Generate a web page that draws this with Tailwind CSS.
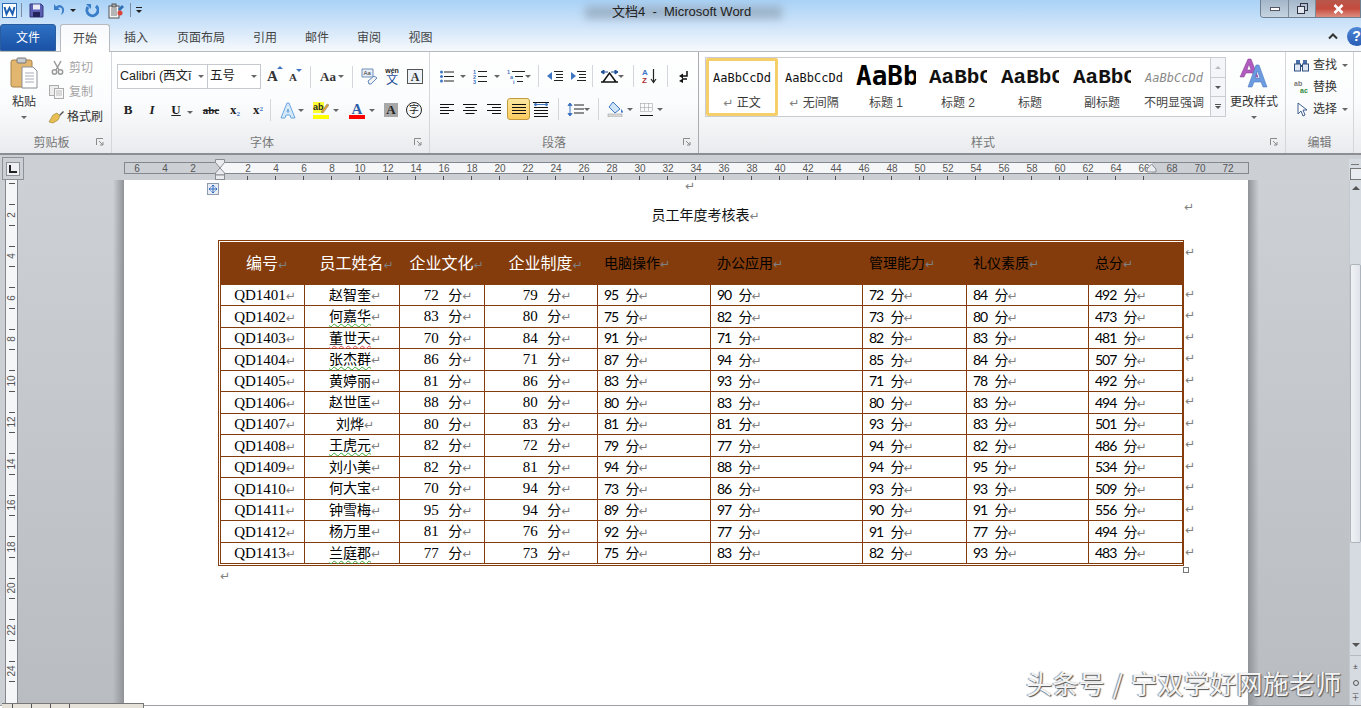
<!DOCTYPE html>
<html lang="zh">
<head>
<meta charset="utf-8">
<script src="https://cdn.jsdelivr.net/npm/@tailwindcss/browser@4"></script>
<title>文档4 - Microsoft Word</title>
</head>
<body class="relative w-[1361px] h-[708px] overflow-hidden bg-[#ccd0d5] font-['Liberation_Sans','Noto_Sans_CJK_SC',sans-serif] text-[12px] text-[#444] [&_i]:not-italic [&_i]:text-[#808080] [&_i]:text-[12px] [&_i]:leading-none [&_i]:tracking-normal [&_i]:font-['DejaVu_Sans'] [&_b.c]:inline-block [&_b.c]:w-0 [&_b.c]:h-0 [&_b.c]:border-x-[3px] [&_b.c]:border-x-transparent [&_b.c]:border-t-[3px] [&_b.c]:border-t-[#666] [&_b.s]:block [&_b.s]:w-px [&_b.s]:h-[22px] [&_b.s]:bg-[#d3d6da]">

<div class="flex flex-col h-[708px]">
  <!-- header: title + tabs -->
  <div class="h-[52px] shrink-0 bg-gradient-to-b from-[#a9d2f6] via-[#cfe4f9] to-[#f6f9fc] border-b border-[#b6b9bd]">
    <div class="relative h-[24px] flex items-start pt-[3px] pl-[2px] gap-0">
      <svg class="w-[15px] h-[15px]" viewBox="0 0 15 15"><rect x=".5" y=".5" width="14" height="14" fill="#fff" stroke="#2b6cb5"/><path d="M2.500 4l2 7 3-6 3 6 2-7" fill="none" stroke="#1d5fb0" stroke-width="2"/></svg>
      <span class="ml-[4px] w-px h-[14px] bg-[#7c8ea3]"></span>
      <svg class="ml-[7px] w-[15px] h-[15px]" viewBox="0 0 15 15"><path d="M1 1h11l2 2v11H1z" fill="#5b5fb3" stroke="#34367a"/><rect x="4" y="1.500" width="7" height="5" fill="#e9ecf6"/><rect x="4" y="9" width="7" height="5" fill="#23245c"/></svg>
      <svg class="ml-[7px] w-[15px] h-[14px]" viewBox="0 0 15 14"><path d="M3 1v6h6L7 5c3-1.500 5 1 4 4l-1 3c4-2 4-7 1-9-2-1.500-4-1-6 .5z" fill="#3a7dc9"/></svg>
      <b class="c ml-[4px] mt-[6px] !border-t-[#222]"></b>
      <svg class="ml-[9px] w-[14px] h-[15px]" viewBox="0 0 14 15"><path d="M11 3A5.500 5.500 0 1 1 3 4" fill="none" stroke="#3a7dc9" stroke-width="3"/><path d="M1 1h5v5z" fill="#3a7dc9"/></svg>
      <svg class="ml-[9px] w-[16px] h-[16px]" viewBox="0 0 16 16"><rect x="1" y="3" width="10" height="12" fill="#f4f4f4" stroke="#555"/><path d="M3 6h6M3 8h6M3 10h6M3 12h6" stroke="#777"/><rect x="4" y="1" width="4" height="3" fill="#aaa" stroke="#555"/><path d="M10 6l4-4 2 2-4 4z" fill="#2f6fb5"/><circle cx="12" cy="10" r="2.500" fill="#d9433a"/></svg>
      <span class="ml-[6px] w-px h-[14px] bg-[#7c8ea3]"></span>
      <span class="ml-[5px] mt-[4px] flex flex-col items-center gap-[2px]"><span class="block w-[6px] h-px bg-[#222]"></span><b class="c !border-t-[#222]"></b></span>
      <div class="absolute left-[585px] top-[6px] w-[197px] h-[13px] bg-[#7f8d9c] opacity-50 blur-[4px]"></div>
      <div class="absolute left-[612px] top-[3px] text-[13px] leading-[18px] text-[#222] whitespace-pre">文档4  -  Microsoft Word</div>
      <div class="absolute right-0 top-0 flex h-[18px] border border-t-0 border-[#6f7f90] rounded-bl-[4px] overflow-hidden w-[101px]">
        <span class="w-[28px] bg-gradient-to-b from-[#a3b6c9] to-[#c6d4e1] border-r border-[#7c8a99] flex items-center justify-center"><span class="block w-[10px] h-[4px] bg-white border border-[#556]"></span></span>
        <span class="w-[27px] bg-gradient-to-b from-[#a3b6c9] to-[#c6d4e1] border-r border-[#7c8a99] flex items-center justify-center"><svg class="w-[11px] h-[11px]" viewBox="0 0 11 11"><rect x="3.500" y=".5" width="7" height="7" fill="none" stroke="#334"/><rect x=".5" y="3.500" width="7" height="7" fill="#dfe6ee" stroke="#334"/></svg></span>
        <span class="flex-1 bg-gradient-to-b from-[#b8574c] via-[#c44a3d] to-[#dc8d80] flex items-center justify-center"><svg class="w-[11px] h-[10px]" viewBox="0 0 11 10"><path d="M1.500 1l8 8M9.500 1l-8 8" stroke="#fff" stroke-width="2.600"/></svg></span>
      </div>
    </div>
    <div class="relative h-[27px] flex items-end text-[#444]">
      <div class="w-[56px] h-[27px] rounded-t-[3px] bg-gradient-to-b from-[#2e70c3] to-[#1a52a6] border border-[#2a5d9e] text-white flex items-center justify-center text-[12px]">文件</div>
      <div class="ml-[4px] w-[50px] h-[28px] -mb-px relative z-10 rounded-t-[3px] bg-gradient-to-b from-[#f7f9fc] to-white border border-b-0 border-[#b6b9bd] flex items-center justify-center">开始</div>
      <div class="w-[52px] h-[27px] flex items-center justify-center">插入</div>
      <div class="w-[78px] h-[27px] flex items-center justify-center">页面布局</div>
      <div class="w-[50px] h-[27px] flex items-center justify-center">引用</div>
      <div class="w-[54px] h-[27px] flex items-center justify-center">邮件</div>
      <div class="w-[50px] h-[27px] flex items-center justify-center">审阅</div>
      <div class="w-[53px] h-[27px] flex items-center justify-center">视图</div>
      <svg class="absolute left-[1328px] top-[9px] w-[10px] h-[7px]" viewBox="0 0 10 7"><path d="M1 5.500l4-4 4 4" fill="none" stroke="#333" stroke-width="2"/></svg>
      <div class="absolute left-[1347px] top-[3px] w-[19px] h-[19px] rounded-full bg-gradient-to-b from-[#4f87d6] to-[#2a5db5] text-white font-bold text-[14px] leading-[19px] text-center">?</div>
    </div>
  </div>

  <!-- ribbon -->
  <div class="h-[103px] shrink-0 flex bg-gradient-to-b from-white via-[#fbfcfd] to-[#e9ebee] border-b-2 border-[#8b8e93] text-[#444]">
    <!-- clipboard -->
    <div class="w-[112px] border-r border-[#d3d6da] flex flex-col">
      <div class="h-[81px] flex">
        <div class="w-[48px] flex flex-col items-center pt-[5px]">
          <svg class="w-[28px] h-[32px]" viewBox="0 0 28 32"><rect x="1" y="3" width="21" height="27" rx="2" fill="#e2b66e" stroke="#a5824a"/><rect x="7" y="1" width="9" height="5" rx="1" fill="#c9ccd1" stroke="#777"/><path d="M12 10h11l4 4v17H12z" fill="#fff" stroke="#8b8f96"/><path d="M15 16h9M15 19h9M15 22h9M15 25h9" stroke="#aab"/></svg>
          <span class="mt-[4px] leading-[18px] text-[#333]">粘贴</span>
          <b class="c mt-[5px]"></b>
        </div>
        <div class="flex flex-col pt-[3px] text-[#a5a5a5]">
          <div class="h-[25px] flex items-center gap-[5px] ml-[3px]"><svg class="w-[13px] h-[15px]" viewBox="0 0 13 15"><path d="M3 1l5 9M10 1L5 10" stroke="#9a9a9a" stroke-width="1.500"/><circle cx="3.500" cy="12" r="2.200" fill="none" stroke="#9a9a9a" stroke-width="1.500"/><circle cx="9.500" cy="12" r="2.200" fill="none" stroke="#9a9a9a" stroke-width="1.500"/></svg>剪切</div>
          <div class="h-[24px] flex items-center gap-[5px] ml-[1px]"><svg class="w-[15px] h-[14px]" viewBox="0 0 15 14"><rect x=".5" y=".5" width="9" height="10" fill="#eee" stroke="#aaa"/><rect x="5.500" y="3.500" width="9" height="10" fill="#f7f7f7" stroke="#aaa"/><path d="M7 6h6M7 8h6M7 10h6" stroke="#bbb"/></svg>复制</div>
          <div class="h-[25px] flex items-center gap-[2px] text-[#333]"><svg class="w-[17px] h-[14px]" viewBox="0 0 17 14"><path d="M11 5l4-4 1 1-4 4z" fill="#555"/><path d="M5 5l4-2 3 3-2 4-5 3-4-1z" fill="#e7bf53" stroke="#9a7d2c" stroke-width=".6"/></svg>格式刷</div>
        </div>
      </div>
      <div class="relative h-[18px] text-center text-[#777] leading-[20px] pr-[8px]">剪贴板<svg class="absolute right-[7px] top-[5px] w-[8px] h-[8px]" viewBox="0 0 8 8"><path d="M.5 7V.5H7M3 3l4 4M4 7h3V4" fill="none" stroke="#8a8a8a"/></svg></div>
    </div>
    <!-- font -->
    <div class="w-[318px] border-r border-[#d3d6da] flex flex-col">
      <div class="h-[81px] pl-[5px] pt-[12px] flex flex-col">
        <div class="h-[25px] flex items-center text-[#222]">
          <div class="w-[91px] h-[25px] border border-[#c6c9cd] bg-white flex items-center pl-[2px] text-[12.500px] overflow-hidden whitespace-nowrap"><span class="w-[73px] overflow-hidden">Calibri (西文ī</span><b class="c ml-[5px]"></b></div>
          <div class="w-[53px] h-[25px] border border-l-0 border-[#c6c9cd] bg-white flex items-center pl-[2px] text-[12.500px]"><span class="w-[39px]">五号</span><b class="c ml-[2px]"></b></div>
          <span class="w-[23px] flex justify-center font-['Liberation_Serif'] font-bold text-[15px] text-[#333] relative">A<b class="c absolute right-[1px] top-[1px] rotate-180 !border-t-[#3f76c4]"></b></span>
          <span class="w-[18px] flex justify-center font-['Liberation_Serif'] font-bold text-[11px] text-[#333] relative pt-[2px]">A<b class="c absolute right-0 top-[2px] !border-t-[#3f76c4]"></b></span>
          <span class="w-[17px] flex justify-center"><b class="s"></b></span>
          <span class="w-[26px] flex items-center pl-[1px] font-['Liberation_Serif'] font-bold text-[13px] text-[#333]">Aa<b class="c ml-[2px]"></b></span>
          <span class="w-[14px] flex justify-center"><b class="s"></b></span>
          <span class="w-[18px] flex justify-center"><svg class="w-[17px] h-[17px]" viewBox="0 0 17 17"><path d="M2 1h11v8H2z" fill="#e8eef7" stroke="#6f8fb8"/><text x="3.500" y="7" font-size="6" font-family="Liberation Sans" fill="#333">Aa</text><path d="M8 13l6-5 3 2-6 6H9z" fill="#f3f3f3" stroke="#5c88c2"/></svg></span>
          <span class="w-[30px] flex flex-col items-center leading-none text-[#1d4f97]"><span class="text-[7px] font-bold text-[#222] leading-[8px]">wén</span><span class="text-[12px] leading-[11px]">文</span></span>
          <span class="w-[16px] h-[15px] border border-[#555] bg-[#eef3f9] flex items-center justify-center font-['Liberation_Serif'] font-bold text-[12px] text-[#333]">A</span>
        </div>
        <div class="mt-[11px] h-[20px] flex items-center text-[#222]">
          <span class="w-[22px] text-center font-['Liberation_Serif'] font-bold text-[13px]">B</span>
          <span class="w-[26px] text-center font-['Liberation_Serif'] italic font-bold text-[13px]">I</span>
          <span class="w-[22px] text-center font-['Liberation_Serif'] font-bold text-[13px] underline">U</span>
          <span class="w-[11px]"><b class="c"></b></span>
          <span class="w-[26px] text-center font-['Liberation_Serif'] font-bold text-[11px] line-through">abc</span>
          <span class="w-[22px] text-center font-['Liberation_Serif'] font-bold text-[13px]">x<sub class="text-[7px] text-[#3f76c4]">2</sub></span>
          <span class="w-[24px] text-center font-['Liberation_Serif'] font-bold text-[13px]">x<sup class="text-[7px] text-[#3f76c4]">2</sup></span>
          <span class="w-[6px]"><b class="s"></b></span>
          <span class="w-[32px] flex items-center justify-center gap-[2px]"><svg class="w-[16px] h-[17px]" viewBox="0 0 16 17"><path d="M1 16L7 1h2l6 15h-4l-1-3H6l-1 3zM7 10h2L8 7z" fill="#d6eafb" stroke="#6aa6dd"/></svg><b class="c"></b></span>
          <span class="w-[36px] flex items-center justify-center gap-[4px]"><span class="relative w-[16px] h-[17px] block"><span class="absolute left-0 top-0 text-[9px] font-bold leading-[11px] bg-[#ffff33] text-[#222]">ab</span><svg class="absolute right-0 top-0 w-[9px] h-[12px]" viewBox="0 0 9 12"><path d="M1 10l6-8 2 1-6 8z" fill="#e4a43a" stroke="#777" stroke-width=".5"/></svg><span class="absolute left-0 right-0 bottom-0 h-[4px] bg-[#ffff00]"></span></span><b class="c"></b></span>
          <span class="w-[36px] flex items-center justify-center gap-[4px]"><span class="relative w-[16px] h-[17px] block text-center"><span class="font-['Liberation_Serif'] font-bold text-[15px] leading-[14px] block text-[#2f5fa8]">A</span><span class="absolute left-0 right-0 bottom-0 h-[4px] bg-[#f00]"></span></span><b class="c"></b></span>
          <span class="w-[22px] flex justify-center"><span class="w-[14px] h-[14px] bg-[#a8a8a8] flex items-center justify-center font-['Liberation_Serif'] font-bold text-[13px] text-[#222]">A</span></span>
          <span class="w-[24px] flex justify-center"><span class="w-[16px] h-[16px] rounded-full border border-[#222] flex items-center justify-center text-[10px] leading-none text-[#222]">字</span></span>
        </div>
      </div>
      <div class="relative h-[18px] text-center text-[#777] leading-[20px] pr-[17px]">字体<svg class="absolute right-[7px] top-[5px] w-[8px] h-[8px]" viewBox="0 0 8 8"><path d="M.5 7V.5H7M3 3l4 4M4 7h3V4" fill="none" stroke="#8a8a8a"/></svg></div>
    </div>
    <!-- paragraph -->
    <div class="w-[269px] border-r border-[#a9acb0] flex flex-col">
      <div class="h-[81px] pt-[13px] flex flex-col">
        <div class="h-[22px] flex items-center">
          <svg class="ml-[10px] w-[14px] h-[13px]" viewBox="0 0 14 13"><path d="M4 2h10M4 6.500h10M4 11h10" stroke="#222"/><circle cx="1.500" cy="2" r="1.500" fill="#3f76c4"/><circle cx="1.500" cy="6.500" r="1.500" fill="#3f76c4"/><circle cx="1.500" cy="11" r="1.500" fill="#3f76c4"/></svg>
          <b class="c ml-[6px]"></b>
          <svg class="ml-[7px] w-[14px] h-[15px]" viewBox="0 0 14 15"><path d="M5 2.500h9M5 7.500h9M5 12.500h9" stroke="#222"/><text x="0" y="5" font-size="5.500" fill="#3f76c4" font-weight="bold">1</text><text x="0" y="10" font-size="5.500" fill="#3f76c4" font-weight="bold">2</text><text x="0" y="15" font-size="5.500" fill="#3f76c4" font-weight="bold">3</text></svg>
          <b class="c ml-[7px]"></b>
          <svg class="ml-[7px] w-[18px] h-[15px]" viewBox="0 0 18 15"><path d="M5 2.500h13M8 7.500h8M10 12.500h6" stroke="#222"/><text x="0" y="5" font-size="5.500" fill="#3f76c4" font-weight="bold">1</text><text x="3" y="10" font-size="5.500" fill="#3f76c4" font-weight="bold">a</text><text x="6" y="15" font-size="5.500" fill="#3f76c4" font-weight="bold">i</text></svg>
          <b class="c"></b>
          <b class="s ml-[7px]"></b>
          <svg class="ml-[8px] w-[16px] h-[13px]" viewBox="0 0 16 13"><path d="M7 1.500h9M9 4.500h7M9 7.500h7M7 10.500h9" stroke="#222" /><path d="M0 6l5-4v8z" fill="#3f76c4"/></svg>
          <svg class="ml-[7px] w-[16px] h-[13px]" viewBox="0 0 16 13"><path d="M7 1.500h9M9 4.500h7M9 7.500h7M7 10.500h9" stroke="#222"/><path d="M6 6L1 2v8z" fill="#3f76c4"/></svg>
          <b class="s ml-[6px]"></b>
          <svg class="ml-[8px] w-[17px] h-[13px]" viewBox="0 0 17 13"><path d="M2 12L8.500 3 15 12M0 12h17" fill="none" stroke="#111" stroke-width="1.500"/><path d="M0 2l3-2v4zM17 2l-3-2v4zM3 2h4M10 2h4" fill="#1d4f97" stroke="#1d4f97"/></svg>
          <b class="c"></b>
          <b class="s ml-[9px]"></b>
          <svg class="ml-[8px] w-[15px] h-[16px]" viewBox="0 0 15 16"><text x="0" y="7" font-size="8" font-weight="bold" fill="#3f76c4">A</text><text x="0" y="15" font-size="8" font-weight="bold" fill="#a33">Z</text><path d="M11.500 1v13M9 11l2.500 3.500L14 11" fill="none" stroke="#222" stroke-width="1.200"/></svg>
          <b class="s ml-[10px]"></b>
          <svg class="ml-[10px] w-[11px] h-[13px]" viewBox="0 0 11 13"><path d="M9 1v5H4M4 9h5" fill="none" stroke="#111" stroke-width="1.500"/><path d="M5 3.500L1 6l4 2.500zM1 11l4-2.500V13z" fill="#111"/></svg>
        </div>
        <div class="mt-[11px] h-[22px] flex items-center">
          <svg class="ml-[10px] w-[14px] h-[11px]" viewBox="0 0 14 11"><path d="M0 .5h14M0 3.500h9M0 6.500h14M0 9.500h9" stroke="#111"/></svg>
          <svg class="ml-[9px] w-[14px] h-[11px]" viewBox="0 0 14 11"><path d="M0 .5h14M2.500 3.500h9M0 6.500h14M2.500 9.500h9" stroke="#111"/></svg>
          <svg class="ml-[10px] w-[14px] h-[11px]" viewBox="0 0 14 11"><path d="M0 .5h14M5 3.500h9M0 6.500h14M5 9.500h9" stroke="#111"/></svg>
          <span class="ml-[6px] w-[23px] h-[22px] rounded-[3px] border border-[#c29b3f] bg-gradient-to-b from-[#fde8a0] to-[#fbcc5c] flex items-center justify-center"><svg class="w-[14px] h-[11px]" viewBox="0 0 14 11"><path d="M0 .5h14M0 3.500h14M0 6.500h14M0 9.500h14" stroke="#111"/></svg></span>
          <svg class="ml-[3px] w-[16px] h-[16px]" viewBox="0 0 16 16"><path d="M0 1.500h16M1 6.500h14M1 9.500h14M1 12.500h14M1 15.500h14" stroke="#111"/><path d="M1 3.500h14M1 3.500l2-1.500v3zM15 3.500l-2-1.500v3z" stroke="#3f76c4" fill="#3f76c4"/></svg>
          <b class="s ml-[9px]"></b>
          <svg class="ml-[8px] w-[17px] h-[15px]" viewBox="0 0 17 15"><path d="M3 1v13M1 3.500l2-2.500 2 2.500zM1 11.500L3 14l2-2.500z" fill="#3f76c4" stroke="#3f76c4"/><path d="M7 3h10M7 7h10M7 11h10" stroke="#222"/></svg>
          <b class="c"></b>
          <b class="s ml-[8px]"></b>
          <svg class="ml-[8px] w-[17px] h-[16px]" viewBox="0 0 17 16"><path d="M6 1l7 7-5 4-6-6z" fill="#cfe4f7" stroke="#3f76c4"/><path d="M14 8s2 2 2 3-2 1-2 0z" fill="#3f76c4"/><rect x="1" y="13" width="14" height="3" fill="#d9d9d9" stroke="#999" stroke-width=".5"/></svg>
          <b class="c ml-[3px]"></b>
          <svg class="ml-[7px] w-[13px] h-[13px]" viewBox="0 0 13 13"><path d="M.5.5h12M.5 4.500h12M.5 8.500h12M.5.5v8M4.500.5v8M8.500.5v8M12.500.5v8" stroke="#999" stroke-dasharray="1 1"/><path d="M0 12.500h13" stroke="#111"/></svg>
          <b class="c ml-[4px]"></b>
        </div>
      </div>
      <div class="relative h-[18px] text-center text-[#777] leading-[20px] pr-[20px]">段落<svg class="absolute right-[7px] top-[5px] w-[8px] h-[8px]" viewBox="0 0 8 8"><path d="M.5 7V.5H7M3 3l4 4M4 7h3V4" fill="none" stroke="#8a8a8a"/></svg></div>
    </div>
    <!-- styles -->
    <div class="w-[587px] border-r border-[#d3d6da] flex flex-col">
      <div class="h-[81px] pt-[5px] pl-[6px] flex">
        <div class="w-[521px] h-[60px] border border-[#c9ccd0] bg-white flex text-[#444]">
          <div class="w-[72px] h-[58px] border-[3px] border-[#f4cf6a] rounded-[2px] flex flex-col items-center shrink-0">
            <span class="mt-[5px] h-[24px] w-[60px] overflow-hidden font-['DejaVu_Sans_Mono'] text-[12px] leading-[24px] text-[#111] whitespace-nowrap text-center">AaBbCcDd</span>
            <span class="mt-[5px] leading-[16px] text-[#333]"><i>↵</i> 正文</span>
          </div>
          <div class="w-[72px] flex flex-col items-center shrink-0">
            <span class="mt-[8px] h-[24px] w-[60px] overflow-hidden font-['DejaVu_Sans_Mono'] text-[12px] leading-[24px] text-[#111] whitespace-nowrap text-center">AaBbCcDd</span>
            <span class="mt-[5px] leading-[16px]"><i>↵</i> 无间隔</span>
          </div>
          <div class="w-[72px] flex flex-col items-center shrink-0">
            <span class="mt-[4px] h-[28px] w-[60px] overflow-hidden font-['DejaVu_Sans_Mono'] font-bold text-[26px] leading-[28px] text-black whitespace-nowrap">AaBb</span>
            <span class="mt-[5px] leading-[16px]">标题 1</span>
          </div>
          <div class="w-[72px] flex flex-col items-center shrink-0">
            <span class="mt-[8px] h-[24px] w-[58px] overflow-hidden font-['Liberation_Mono'] font-bold text-[21px] leading-[24px] text-[#111] whitespace-nowrap">AaBbC</span>
            <span class="mt-[5px] leading-[16px]">标题 2</span>
          </div>
          <div class="w-[72px] flex flex-col items-center shrink-0">
            <span class="mt-[8px] h-[24px] w-[58px] overflow-hidden font-['Liberation_Mono'] font-bold text-[21px] leading-[24px] text-[#111] whitespace-nowrap">AaBbC</span>
            <span class="mt-[5px] leading-[16px]">标题</span>
          </div>
          <div class="w-[72px] flex flex-col items-center shrink-0">
            <span class="mt-[8px] h-[24px] w-[58px] overflow-hidden font-['Liberation_Mono'] font-bold text-[21px] leading-[24px] text-[#111] whitespace-nowrap">AaBbC</span>
            <span class="mt-[5px] leading-[16px]">副标题</span>
          </div>
          <div class="w-[72px] flex flex-col items-center shrink-0">
            <span class="mt-[8px] h-[24px] w-[60px] overflow-hidden font-['DejaVu_Sans_Mono'] italic text-[12px] leading-[24px] text-[#8a8a8a] whitespace-nowrap text-center">AaBbCcDd</span>
            <span class="mt-[5px] leading-[16px]">不明显强调</span>
          </div>
          <div class="w-[15px] ml-auto flex flex-col border-l border-[#c9ccd0] bg-[#f3f5f8]">
            <span class="h-[20px] flex items-center justify-center border-b border-[#c9ccd0]"><b class="c rotate-180 !border-t-[#bbb]"></b></span>
            <span class="h-[19px] flex items-center justify-center border-b border-[#c9ccd0]"><b class="c !border-t-[#555]"></b></span>
            <span class="h-[19px] flex flex-col gap-[1px] items-center justify-center"><span class="block w-[6px] h-px bg-[#555]"></span><b class="c !border-t-[#555]"></b></span>
          </div>
        </div>
        <div class="w-[56px] flex flex-col items-center">
          <svg class="mt-[1px] w-[30px] h-[30px]" viewBox="0 0 30 30"><path d="M1 19L9 1h3l7 18h-4l-1-4H7l-2 4zM8 12h4l-2-6z" fill="#b25bbf" stroke="#7f3a8c" stroke-width=".5"/><path d="M9 29L17 7h3l8 22h-4l-2-5h-7l-2 5zM16 20h5l-2.500-7z" fill="#6d9be0" stroke="#3e6fb8" stroke-width=".5"/></svg>
          <span class="mt-[5px] leading-[18px] text-[#333] whitespace-nowrap">更改样式</span>
          <b class="c mt-[5px]"></b>
        </div>
      </div>
      <div class="relative h-[18px] text-[#777] leading-[20px] pl-[272px]">样式<svg class="absolute right-[7px] top-[5px] w-[8px] h-[8px]" viewBox="0 0 8 8"><path d="M.5 7V.5H7M3 3l4 4M4 7h3V4" fill="none" stroke="#8a8a8a"/></svg></div>
    </div>
    <!-- editing -->
    <div class="w-[68px] border-r border-[#d3d6da] flex flex-col">
      <div class="h-[81px] pt-[2px] pl-[8px] text-[#333]">
        <div class="h-[22px] flex items-center gap-[4px]"><svg class="w-[15px] h-[14px]" viewBox="0 0 15 14"><path d="M2 2h4v4H2zM9 2h4v4H9z" fill="#4a6ea8"/><rect x=".5" y="6" width="6" height="7" fill="#dfe7f3" stroke="#2f4f80"/><rect x="8.500" y="6" width="6" height="7" fill="#dfe7f3" stroke="#2f4f80"/><path d="M6 7h3v2H6z" fill="#2f4f80"/></svg>查找<b class="c ml-[1px]"></b></div>
        <div class="h-[22px] flex items-center gap-[4px]"><span class="w-[15px] text-[7px] leading-[7px] font-bold text-[#777]">ab<br><span class="text-[#2d8a3a] pl-[6px]">ac</span></span>替换</div>
        <div class="h-[22px] flex items-center gap-[4px]"><svg class="w-[15px] h-[15px]" viewBox="0 0 15 15"><path d="M4 1v11l3-3 2 5 2-1-2-5h4z" fill="#fff" stroke="#3f5f8f"/></svg>选择<b class="c ml-[1px]"></b></div>
      </div>
      <div class="h-[18px] text-center text-[#777] leading-[20px]">编辑</div>
    </div>
  </div>

  <!-- horizontal ruler row -->
  <div class="relative h-[25px] shrink-0 flex text-[#555] text-[10px] leading-[11px]">
    <div class="w-[124px] pl-[2px] pt-[2px]">
      <div class="w-[22px] h-[23px] border border-[#8e9298] bg-[#ccd0d5] flex items-center justify-center"><span class="w-[14px] h-[14px] border border-[#8e9298] bg-[#eef0f3] flex items-center justify-center"><svg class="w-[8px] h-[8px]" viewBox="0 0 8 8"><path d="M1 0v7h7" fill="none" stroke="#222" stroke-width="2"/></svg></span></div>
    </div>
    <div class="relative pt-[7px]">
      <div class="flex h-[12px] w-[1125px] border border-[#84888e]">
        <div class="w-[95px] flex justify-end pr-[13px]"><span class="w-[28px] shrink-0 text-center">6</span><span class="w-[28px] shrink-0 text-center">4</span><span class="w-[28px] shrink-0 text-center">2</span></div>
        <div class="w-[932px] bg-[#f5f6f8] flex pl-[14px]">
          <span class="w-[28px] shrink-0 text-center">2</span><span class="w-[28px] shrink-0 text-center">4</span><span class="w-[28px] shrink-0 text-center">6</span><span class="w-[28px] shrink-0 text-center">8</span><span class="w-[28px] shrink-0 text-center">10</span><span class="w-[28px] shrink-0 text-center">12</span><span class="w-[28px] shrink-0 text-center">14</span><span class="w-[28px] shrink-0 text-center">16</span><span class="w-[28px] shrink-0 text-center">18</span><span class="w-[28px] shrink-0 text-center">20</span><span class="w-[28px] shrink-0 text-center">22</span><span class="w-[28px] shrink-0 text-center">24</span><span class="w-[28px] shrink-0 text-center">26</span><span class="w-[28px] shrink-0 text-center">28</span><span class="w-[28px] shrink-0 text-center">30</span><span class="w-[28px] shrink-0 text-center">32</span><span class="w-[28px] shrink-0 text-center">34</span><span class="w-[28px] shrink-0 text-center">36</span><span class="w-[28px] shrink-0 text-center">38</span><span class="w-[28px] shrink-0 text-center">40</span><span class="w-[28px] shrink-0 text-center">42</span><span class="w-[28px] shrink-0 text-center">44</span><span class="w-[28px] shrink-0 text-center">46</span><span class="w-[28px] shrink-0 text-center">48</span><span class="w-[28px] shrink-0 text-center">50</span><span class="w-[28px] shrink-0 text-center">52</span><span class="w-[28px] shrink-0 text-center">54</span><span class="w-[28px] shrink-0 text-center">56</span><span class="w-[28px] shrink-0 text-center">58</span><span class="w-[28px] shrink-0 text-center">60</span><span class="w-[28px] shrink-0 text-center">62</span><span class="w-[28px] shrink-0 text-center">64</span><span class="w-[28px] shrink-0 text-center">66</span>
        </div>
        <div class="flex ml-[6px]"><span class="w-[28px] text-center">68</span><span class="w-[28px] text-center">70</span><span class="w-[28px] text-center">72</span></div>
      </div>
      <div class="ml-[123px] mt-[2px] w-[924px] h-[4px] bg-[repeating-linear-gradient(90deg,#555_0,#555_1px,transparent_1px,transparent_28px)]"></div>
      <svg class="absolute left-[90px] top-[4px] w-[12px] h-[21px]" viewBox="0 0 12 21"><path d="M1.500.5h9v3L6 9 1.500 3.500z" fill="#e9ebee" stroke="#8a8d92"/><path d="M6 9l4.500 5v2h-9v-2z" fill="#e9ebee" stroke="#8a8d92"/><rect x="1.500" y="16" width="9" height="4.500" fill="#e9ebee" stroke="#8a8d92"/></svg>
      <svg class="absolute left-[1022px] top-[8px] w-[11px] h-[10px]" viewBox="0 0 11 10"><path d="M5.500 1L10 6v3H1V6z" fill="#e9ebee" stroke="#8a8d92"/></svg>
    </div>
    <div class="absolute left-[1349px] top-[4px] w-[12px] h-[21px] bg-[#d6dbe2] flex flex-col">
      <span class="block w-[8px] h-px bg-[#777] mx-auto mt-[5px]"></span>
      <span class="mt-[3px] ml-[1px] w-[14px] h-[12px] border border-[#777] bg-[#e9edf2]"></span>
    </div>
  </div>

  <!-- main -->
  <div class="flex-1 min-h-0 flex">
    <!-- vertical ruler -->
    <div class="w-[18px] shrink-0 pl-[5px]">
      <div class="w-[13px] h-[525px] border-x border-[#84888e] bg-[#f5f6f8] overflow-hidden text-[10px] text-[#555]">
        <div class="-mt-[27.500px]">
          <div class="h-[41.500px] py-[10px] flex flex-col items-center justify-between"><span class="block w-[6px] h-px"></span><span class="block w-[6px] h-px bg-[#555]"></span></div>
          <div class="h-[41.500px] py-[10px] flex flex-col items-center justify-between"><span class="block w-[6px] h-px bg-[#555]"></span><span class="-rotate-90 leading-none">2</span><span class="block w-[6px] h-px bg-[#555]"></span></div>
          <div class="h-[41.500px] py-[10px] flex flex-col items-center justify-between"><span class="block w-[6px] h-px bg-[#555]"></span><span class="-rotate-90 leading-none">4</span><span class="block w-[6px] h-px bg-[#555]"></span></div>
          <div class="h-[41.500px] py-[10px] flex flex-col items-center justify-between"><span class="block w-[6px] h-px bg-[#555]"></span><span class="-rotate-90 leading-none">6</span><span class="block w-[6px] h-px bg-[#555]"></span></div>
          <div class="h-[41.500px] py-[10px] flex flex-col items-center justify-between"><span class="block w-[6px] h-px bg-[#555]"></span><span class="-rotate-90 leading-none">8</span><span class="block w-[6px] h-px bg-[#555]"></span></div>
          <div class="h-[41.500px] py-[10px] flex flex-col items-center justify-between"><span class="block w-[6px] h-px bg-[#555]"></span><span class="-rotate-90 leading-none">10</span><span class="block w-[6px] h-px bg-[#555]"></span></div>
          <div class="h-[41.500px] py-[10px] flex flex-col items-center justify-between"><span class="block w-[6px] h-px bg-[#555]"></span><span class="-rotate-90 leading-none">12</span><span class="block w-[6px] h-px bg-[#555]"></span></div>
          <div class="h-[41.500px] py-[10px] flex flex-col items-center justify-between"><span class="block w-[6px] h-px bg-[#555]"></span><span class="-rotate-90 leading-none">14</span><span class="block w-[6px] h-px bg-[#555]"></span></div>
          <div class="h-[41.500px] py-[10px] flex flex-col items-center justify-between"><span class="block w-[6px] h-px bg-[#555]"></span><span class="-rotate-90 leading-none">16</span><span class="block w-[6px] h-px bg-[#555]"></span></div>
          <div class="h-[41.500px] py-[10px] flex flex-col items-center justify-between"><span class="block w-[6px] h-px bg-[#555]"></span><span class="-rotate-90 leading-none">18</span><span class="block w-[6px] h-px bg-[#555]"></span></div>
          <div class="h-[41.500px] py-[10px] flex flex-col items-center justify-between"><span class="block w-[6px] h-px bg-[#555]"></span><span class="-rotate-90 leading-none">20</span><span class="block w-[6px] h-px bg-[#555]"></span></div>
          <div class="h-[41.500px] py-[10px] flex flex-col items-center justify-between"><span class="block w-[6px] h-px bg-[#555]"></span><span class="-rotate-90 leading-none">22</span><span class="block w-[6px] h-px bg-[#555]"></span></div>
          <div class="h-[41.500px] py-[10px] flex flex-col items-center justify-between"><span class="block w-[6px] h-px bg-[#555]"></span><span class="-rotate-90 leading-none">24</span><span class="block w-[6px] h-px bg-[#555]"></span></div>
        </div>
      </div>
    </div>
    <!-- canvas -->
    <div class="w-[1331px] shrink-0 bg-gradient-to-b from-[#cdd1d6] to-[#b9bcc1] flex pl-[95px]">
      <div class="w-[11px] bg-gradient-to-r from-transparent to-[#8f9297]"></div>
      <div class="relative w-[1124px] bg-white text-black">
        <div class="h-[60px] relative">
          <div class="pl-[561px] h-[14px] leading-[10px]"><i>↵</i></div>
          <div class="mt-[11px] h-[20px] flex justify-center text-[14px] leading-[20px] text-[#111] pl-[39px]"><span>员工年度考核表<i>↵</i></span></div>
          <span class="absolute left-[83px] top-[3px] w-[12px] h-[12px] border border-[#8f9bb0] bg-[#e8edf5] flex items-center justify-center"><svg class="w-[8px] h-[8px]" viewBox="0 0 8 8"><path d="M4 0v8M0 4h8M2.500 1.500L4 0l1.500 1.500M2.500 6.500L4 8l1.500-1.500M1.500 2.500L0 4l1.500 1.500M6.500 2.500L8 4 6.500 5.500" fill="none" stroke="#2f6bc0"/></svg></span>
          <span class="absolute left-[1060px] top-[20px] leading-[14px]"><i>↵</i></span>
        </div>
        <div class="pl-[94px] flex items-start">
          <div class="w-[966px] border border-[#843c0c] p-[1px] shrink-0">
            <table class="border-collapse table-fixed w-[962px] font-['Liberation_Serif','Noto_Sans_CJK_SC',serif] text-[15px] text-black [&_td]:p-0 [&_td]:leading-[16px] [&_td]:border [&_td]:border-[#843c0c] [&_td]:text-center [&_td:nth-child(1)]:pl-[5px] [&_td:nth-child(2)]:pl-[6px] [&_td:nth-child(3)]:pl-[12px] [&_td:nth-child(4)]:pl-[12px] [&_td:nth-child(3)]:[word-spacing:1px] [&_td:nth-child(4)]:[word-spacing:1px] [&_td:nth-child(n+5)]:text-left [&_td:nth-child(n+5)]:pl-[6px] [&_td:nth-child(n+5)]:font-['Lato','Noto_Sans_CJK_SC',sans-serif] [&_td:nth-child(n+5)]:text-[14px] [&_td:nth-child(n+5)]:tracking-[-1px] [&_td:nth-child(n+5)]:[word-spacing:1px] [&_td:nth-child(n+2)_u]:text-[14px] [&_tr:nth-child(odd)_td]:h-[21px] [&_tr:nth-child(even)_td]:h-[22px]">
              <colgroup><col class="w-[84px]"><col class="w-[95px]"><col class="w-[85px]"><col class="w-[113px]"><col class="w-[113px]"><col class="w-[152px]"><col class="w-[104px]"><col class="w-[122px]"><col class="w-[94px]"></colgroup>
              <thead>
                <tr class="bg-[#843c0c] text-white text-[16px] font-['Noto_Sans_CJK_SC',sans-serif] [&_td]:!h-[42px] [&_td]:!pb-[2px] [&_td:nth-child(-n+4)]:!pl-[9px] [&_td:nth-child(n+5)]:!text-black [&_td:nth-child(n+5)]:!tracking-normal">
                  <td>编号<i>↵</i></td><td>员工姓名<i>↵</i></td><td>企业文化<i>↵</i></td><td>企业制度<i>↵</i></td><td>电脑操作<i>↵</i></td><td>办公应用<i>↵</i></td><td>管理能力<i>↵</i></td><td>礼仪素质<i>↵</i></td><td>总分<i>↵</i></td>
                </tr>
              </thead>
              <tbody>
                <tr><td>QD1401<i>↵</i></td><td><u class="no-underline">赵智奎</u><i>↵</i></td><td>72&nbsp;&nbsp;<u class="no-underline">分</u><i>↵</i></td><td>79&nbsp;&nbsp;<u class="no-underline">分</u><i>↵</i></td><td>95&nbsp;&nbsp;分<i>↵</i></td><td>90&nbsp;&nbsp;分<i>↵</i></td><td>72&nbsp;&nbsp;分<i>↵</i></td><td>84&nbsp;&nbsp;分<i>↵</i></td><td>492&nbsp;&nbsp;分<i>↵</i></td></tr>
                <tr><td>QD1402<i>↵</i></td><td><u class="underline decoration-wavy decoration-[#3aa83a] decoration-1 underline-offset-2">何嘉华</u><i>↵</i></td><td>83&nbsp;&nbsp;<u class="no-underline">分</u><i>↵</i></td><td>80&nbsp;&nbsp;<u class="no-underline">分</u><i>↵</i></td><td>75&nbsp;&nbsp;分<i>↵</i></td><td>82&nbsp;&nbsp;分<i>↵</i></td><td>73&nbsp;&nbsp;分<i>↵</i></td><td>80&nbsp;&nbsp;分<i>↵</i></td><td>473&nbsp;&nbsp;分<i>↵</i></td></tr>
                <tr><td>QD1403<i>↵</i></td><td><u class="underline decoration-wavy decoration-[#e05050] decoration-1 underline-offset-2">董世天</u><i>↵</i></td><td>70&nbsp;&nbsp;<u class="no-underline">分</u><i>↵</i></td><td>84&nbsp;&nbsp;<u class="no-underline">分</u><i>↵</i></td><td>91&nbsp;&nbsp;分<i>↵</i></td><td>71&nbsp;&nbsp;分<i>↵</i></td><td>82&nbsp;&nbsp;分<i>↵</i></td><td>83&nbsp;&nbsp;分<i>↵</i></td><td>481&nbsp;&nbsp;分<i>↵</i></td></tr>
                <tr><td>QD1404<i>↵</i></td><td><u class="underline decoration-wavy decoration-[#3aa83a] decoration-1 underline-offset-2">张杰群</u><i>↵</i></td><td>86&nbsp;&nbsp;<u class="no-underline">分</u><i>↵</i></td><td>71&nbsp;&nbsp;<u class="no-underline">分</u><i>↵</i></td><td>87&nbsp;&nbsp;分<i>↵</i></td><td>94&nbsp;&nbsp;分<i>↵</i></td><td>85&nbsp;&nbsp;分<i>↵</i></td><td>84&nbsp;&nbsp;分<i>↵</i></td><td>507&nbsp;&nbsp;分<i>↵</i></td></tr>
                <tr><td>QD1405<i>↵</i></td><td><u class="no-underline">黄婷丽</u><i>↵</i></td><td>81&nbsp;&nbsp;<u class="no-underline">分</u><i>↵</i></td><td>86&nbsp;&nbsp;<u class="no-underline">分</u><i>↵</i></td><td>83&nbsp;&nbsp;分<i>↵</i></td><td>93&nbsp;&nbsp;分<i>↵</i></td><td>71&nbsp;&nbsp;分<i>↵</i></td><td>78&nbsp;&nbsp;分<i>↵</i></td><td>492&nbsp;&nbsp;分<i>↵</i></td></tr>
                <tr><td>QD1406<i>↵</i></td><td><u class="no-underline">赵世匡</u><i>↵</i></td><td>88&nbsp;&nbsp;<u class="no-underline">分</u><i>↵</i></td><td>80&nbsp;&nbsp;<u class="no-underline">分</u><i>↵</i></td><td>80&nbsp;&nbsp;分<i>↵</i></td><td>83&nbsp;&nbsp;分<i>↵</i></td><td>80&nbsp;&nbsp;分<i>↵</i></td><td>83&nbsp;&nbsp;分<i>↵</i></td><td>494&nbsp;&nbsp;分<i>↵</i></td></tr>
                <tr><td>QD1407<i>↵</i></td><td><u class="no-underline">刘烨</u><i>↵</i></td><td>80&nbsp;&nbsp;<u class="no-underline">分</u><i>↵</i></td><td>83&nbsp;&nbsp;<u class="no-underline">分</u><i>↵</i></td><td>81&nbsp;&nbsp;分<i>↵</i></td><td>81&nbsp;&nbsp;分<i>↵</i></td><td>93&nbsp;&nbsp;分<i>↵</i></td><td>83&nbsp;&nbsp;分<i>↵</i></td><td>501&nbsp;&nbsp;分<i>↵</i></td></tr>
                <tr><td>QD1408<i>↵</i></td><td><u class="underline decoration-wavy decoration-[#3aa83a] decoration-1 underline-offset-2">王虎元</u><i>↵</i></td><td>82&nbsp;&nbsp;<u class="no-underline">分</u><i>↵</i></td><td>72&nbsp;&nbsp;<u class="no-underline">分</u><i>↵</i></td><td>79&nbsp;&nbsp;分<i>↵</i></td><td>77&nbsp;&nbsp;分<i>↵</i></td><td>94&nbsp;&nbsp;分<i>↵</i></td><td>82&nbsp;&nbsp;分<i>↵</i></td><td>486&nbsp;&nbsp;分<i>↵</i></td></tr>
                <tr><td>QD1409<i>↵</i></td><td><u class="no-underline">刘小美</u><i>↵</i></td><td>82&nbsp;&nbsp;<u class="no-underline">分</u><i>↵</i></td><td>81&nbsp;&nbsp;<u class="no-underline">分</u><i>↵</i></td><td>94&nbsp;&nbsp;分<i>↵</i></td><td>88&nbsp;&nbsp;分<i>↵</i></td><td>94&nbsp;&nbsp;分<i>↵</i></td><td>95&nbsp;&nbsp;分<i>↵</i></td><td>534&nbsp;&nbsp;分<i>↵</i></td></tr>
                <tr><td>QD1410<i>↵</i></td><td><u class="no-underline">何大宝</u><i>↵</i></td><td>70&nbsp;&nbsp;<u class="no-underline">分</u><i>↵</i></td><td>94&nbsp;&nbsp;<u class="no-underline">分</u><i>↵</i></td><td>73&nbsp;&nbsp;分<i>↵</i></td><td>86&nbsp;&nbsp;分<i>↵</i></td><td>93&nbsp;&nbsp;分<i>↵</i></td><td>93&nbsp;&nbsp;分<i>↵</i></td><td>509&nbsp;&nbsp;分<i>↵</i></td></tr>
                <tr><td>QD1411<i>↵</i></td><td><u class="no-underline">钟雪梅</u><i>↵</i></td><td>95&nbsp;&nbsp;<u class="no-underline">分</u><i>↵</i></td><td>94&nbsp;&nbsp;<u class="no-underline">分</u><i>↵</i></td><td>89&nbsp;&nbsp;分<i>↵</i></td><td>97&nbsp;&nbsp;分<i>↵</i></td><td>90&nbsp;&nbsp;分<i>↵</i></td><td>91&nbsp;&nbsp;分<i>↵</i></td><td>556&nbsp;&nbsp;分<i>↵</i></td></tr>
                <tr><td>QD1412<i>↵</i></td><td><u class="no-underline">杨万里</u><i>↵</i></td><td>81&nbsp;&nbsp;<u class="no-underline">分</u><i>↵</i></td><td>76&nbsp;&nbsp;<u class="no-underline">分</u><i>↵</i></td><td>92&nbsp;&nbsp;分<i>↵</i></td><td>77&nbsp;&nbsp;分<i>↵</i></td><td>91&nbsp;&nbsp;分<i>↵</i></td><td>77&nbsp;&nbsp;分<i>↵</i></td><td>494&nbsp;&nbsp;分<i>↵</i></td></tr>
                <tr><td>QD1413<i>↵</i></td><td><u class="underline decoration-wavy decoration-[#3aa83a] decoration-1 underline-offset-2">兰庭郡</u><i>↵</i></td><td>77&nbsp;&nbsp;<u class="no-underline">分</u><i>↵</i></td><td>73&nbsp;&nbsp;<u class="no-underline">分</u><i>↵</i></td><td>75&nbsp;&nbsp;分<i>↵</i></td><td>83&nbsp;&nbsp;分<i>↵</i></td><td>82&nbsp;&nbsp;分<i>↵</i></td><td>93&nbsp;&nbsp;分<i>↵</i></td><td>483&nbsp;&nbsp;分<i>↵</i></td></tr>
              </tbody>
            </table>
          </div>
          <div class="pl-[1px] flex flex-col [&_span]:block [&_span]:leading-[21px]">
            <span class="h-[44px] !leading-[24px]"><i>↵</i></span>
            <span class="h-[21px]"><i>↵</i></span><span class="h-[22px]"><i>↵</i></span><span class="h-[21px]"><i>↵</i></span><span class="h-[22px]"><i>↵</i></span><span class="h-[21px]"><i>↵</i></span><span class="h-[22px]"><i>↵</i></span><span class="h-[21px]"><i>↵</i></span><span class="h-[22px]"><i>↵</i></span><span class="h-[21px]"><i>↵</i></span><span class="h-[22px]"><i>↵</i></span><span class="h-[21px]"><i>↵</i></span><span class="h-[22px]"><i>↵</i></span><span class="h-[21px]"><i>↵</i></span>
          </div>
        </div>
        <div class="pl-[96px] leading-[20px]"><i>↵</i></div>
        <span class="absolute left-[1059px] top-[387px] w-[6px] h-[6px] border border-[#777] bg-white"></span>
      </div>
      <div class="w-[11px] bg-gradient-to-r from-[#8f9297] to-transparent"></div>
    </div>
    <!-- scrollbar -->
    <div class="w-[12px] shrink-0 bg-[#d6dbe2] border-l border-[#c3c8ce] flex flex-col items-center">
      <b class="c mt-[6px] rotate-180 !border-x-[4px] !border-t-[4px] !border-t-[#555]"></b>
      <span class="mt-[74px] block w-full h-[279px] bg-gradient-to-r from-[#f0f2f5] to-[#e0e4ea] border border-[#aeb4bb] rounded-[2px]"></span>
      <b class="c mt-[100px] !border-x-[4px] !border-t-[4px] !border-t-[#555]"></b>
      <span class="mt-[8px] block w-full h-px bg-[#b5bac1]"></span>
      <span class="mt-[7px] text-[8px] leading-[8px] text-[#444]">±</span>
      <span class="mt-[9px] block w-[6px] h-[6px] rounded-full border border-[#555]"></span>
      <span class="mt-[8px] text-[8px] leading-[8px] text-[#444]">∓</span>
    </div>
  </div>
  <div class="h-[3px] shrink-0 bg-white border-t border-[#9ea2a8]"></div>
</div>

<!-- status-bar view tabs -->
<div class="absolute left-[2px] top-[703px] w-[142px] h-[5px] bg-[#e6e2da] border-t border-r border-[#777] flex gap-[18px] pl-[10px]"><span class="block w-px bg-[#555]"></span><span class="block w-px bg-[#555]"></span><span class="block w-px bg-[#555]"></span><span class="block w-px bg-[#555]"></span></div>
<!-- watermark -->
<div class="absolute left-[1026px] top-[665px] text-[26.300px] leading-[36px] whitespace-pre text-[#f3f3f3] [text-shadow:1px_1px_1px_#555,-1px_0_1px_#888] font-['Noto_Sans_CJK_SC',sans-serif]">头条号<span class="mx-[2px]"> / </span>宁双学好网施老师</div>
</body>
</html>
